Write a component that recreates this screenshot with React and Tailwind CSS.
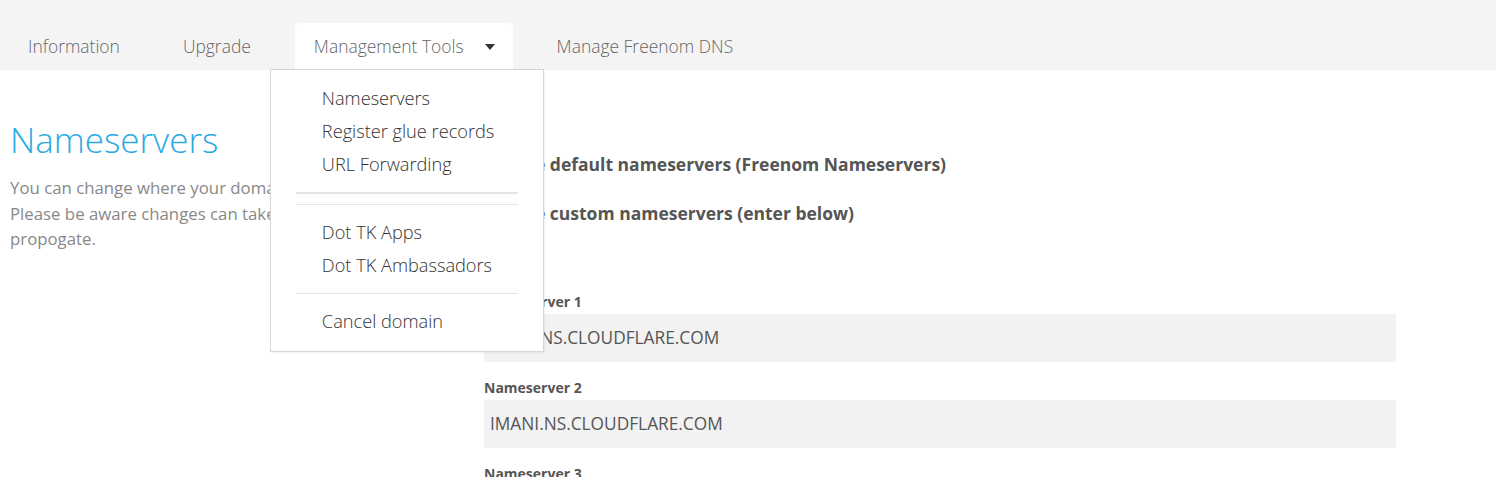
const tabs = ['Information', 'Upgrade', 'Management Tools', 'Manage Freenom DNS'];

const menuGroups = [
  ['Nameservers', 'Register glue records', 'URL Forwarding'],
  ['Dot TK Apps', 'Dot TK Ambassadors'],
  ['Cancel domain'],
];

function Caret() {
  return (
    <svg width="10" height="6" viewBox="0 0 10 6" className="ml-[21px] mt-[1px]">
      <path d="M0 0 L10 0 L5 6 Z" fill="#333" />
    </svg>
  );
}

function Dropdown() {
  return (
    <div className="absolute left-[-25px] top-[46px] z-10 w-[274px] border border-[#d6d6d6] bg-white px-[25px] pt-[12px] pb-[13px] shadow-[1px_1px_2px_rgba(0,0,0,0.06)]">
      {menuGroups[0].map((item) => (
        <div key={item} className="h-[33px] whitespace-nowrap pl-[26px] text-[18.2px] leading-[32px] text-[#333]">{item}</div>
      ))}
      <div className="mt-[11px] h-[2px] bg-[#e5e5e5]" />
      <div className="mt-[10px] h-[1px] bg-[#e5e5e5]" />
      <div className="mt-[11px]">
        {menuGroups[1].map((item) => (
          <div key={item} className="h-[33px] whitespace-nowrap pl-[26px] text-[18.2px] leading-[32px] text-[#333]">{item}</div>
        ))}
      </div>
      <div className="mt-[11px] h-[1px] bg-[#e5e5e5]" />
      <div className="mt-[11px]">
        {menuGroups[2].map((item) => (
          <div key={item} className="h-[33px] whitespace-nowrap pl-[26px] text-[18.2px] leading-[32px] text-[#333]">{item}</div>
        ))}
      </div>
    </div>
  );
}

function NameserverField({ label, value }) {
  return (
    <div>
      <div className="h-[24px] text-[14px] font-bold leading-[24px] text-[#555]">{label}</div>
      {value !== undefined && (
        <div className="flex h-[48px] items-center bg-[#f2f2f2] px-[6px] text-[17.3px] text-[#555]">{value}</div>
      )}
    </div>
  );
}

export default function App() {
  return (
    <div className="min-h-[477px] bg-white font-['Open_Sans',sans-serif]">
      <div className="h-[70px] bg-[#f4f4f4] pl-[9px] pt-[23px]">
        <div className="flex gap-[25px]">
          {tabs.map((tab) => {
            const active = tab === 'Management Tools';
            return (
              <div
                key={tab}
                className={`relative flex h-[47px] items-center px-[19px] pb-[1px] text-[17.45px] font-light text-[#666] ${active ? 'rounded-t-[5px] bg-white pr-[18px]' : ''}`}
              >
                {tab}
                {active && <Caret />}
                {active && <Dropdown />}
              </div>
            );
          })}
        </div>
      </div>

      <div className="flex">
        <div className="w-[484px] pl-[10px]">
          <h1 className="mt-[50px] text-[35px] font-light leading-[40px] text-[#2aaae3]">Nameservers</h1>
          <p className="mt-[15px] text-[16.8px] leading-[25.5px] text-[#888]">
            You can change where your domain points to here.<br />
            Please be aware changes can take up to 24 hours to<br />
            propogate.
          </p>
        </div>

        <div className="w-[912px]">
          <div className="mt-[80px] flex h-[28px] items-center whitespace-nowrap text-[17.5px] font-bold text-[#555]">
            <span className="mr-[16px] inline-block h-[13px] w-[13px] rounded-full border border-[#999]" />
            Use default nameservers (Freenom Nameservers)
          </div>
          <div className="mt-[21px] flex h-[28px] items-center whitespace-nowrap text-[17.5px] font-bold text-[#555]">
            <span className="mr-[16px] inline-block h-[13px] w-[13px] rounded-full border border-[#999]" />
            Use custom nameservers (enter below)
          </div>
          <div className="mt-[63px] flex flex-col gap-[14px]">
            <NameserverField label="Nameserver 1" value="TONY.NS.CLOUDFLARE.COM" />
            <NameserverField label="Nameserver 2" value="IMANI.NS.CLOUDFLARE.COM" />
            <NameserverField label="Nameserver 3" />
          </div>
        </div>
      </div>
    </div>
  );
}
